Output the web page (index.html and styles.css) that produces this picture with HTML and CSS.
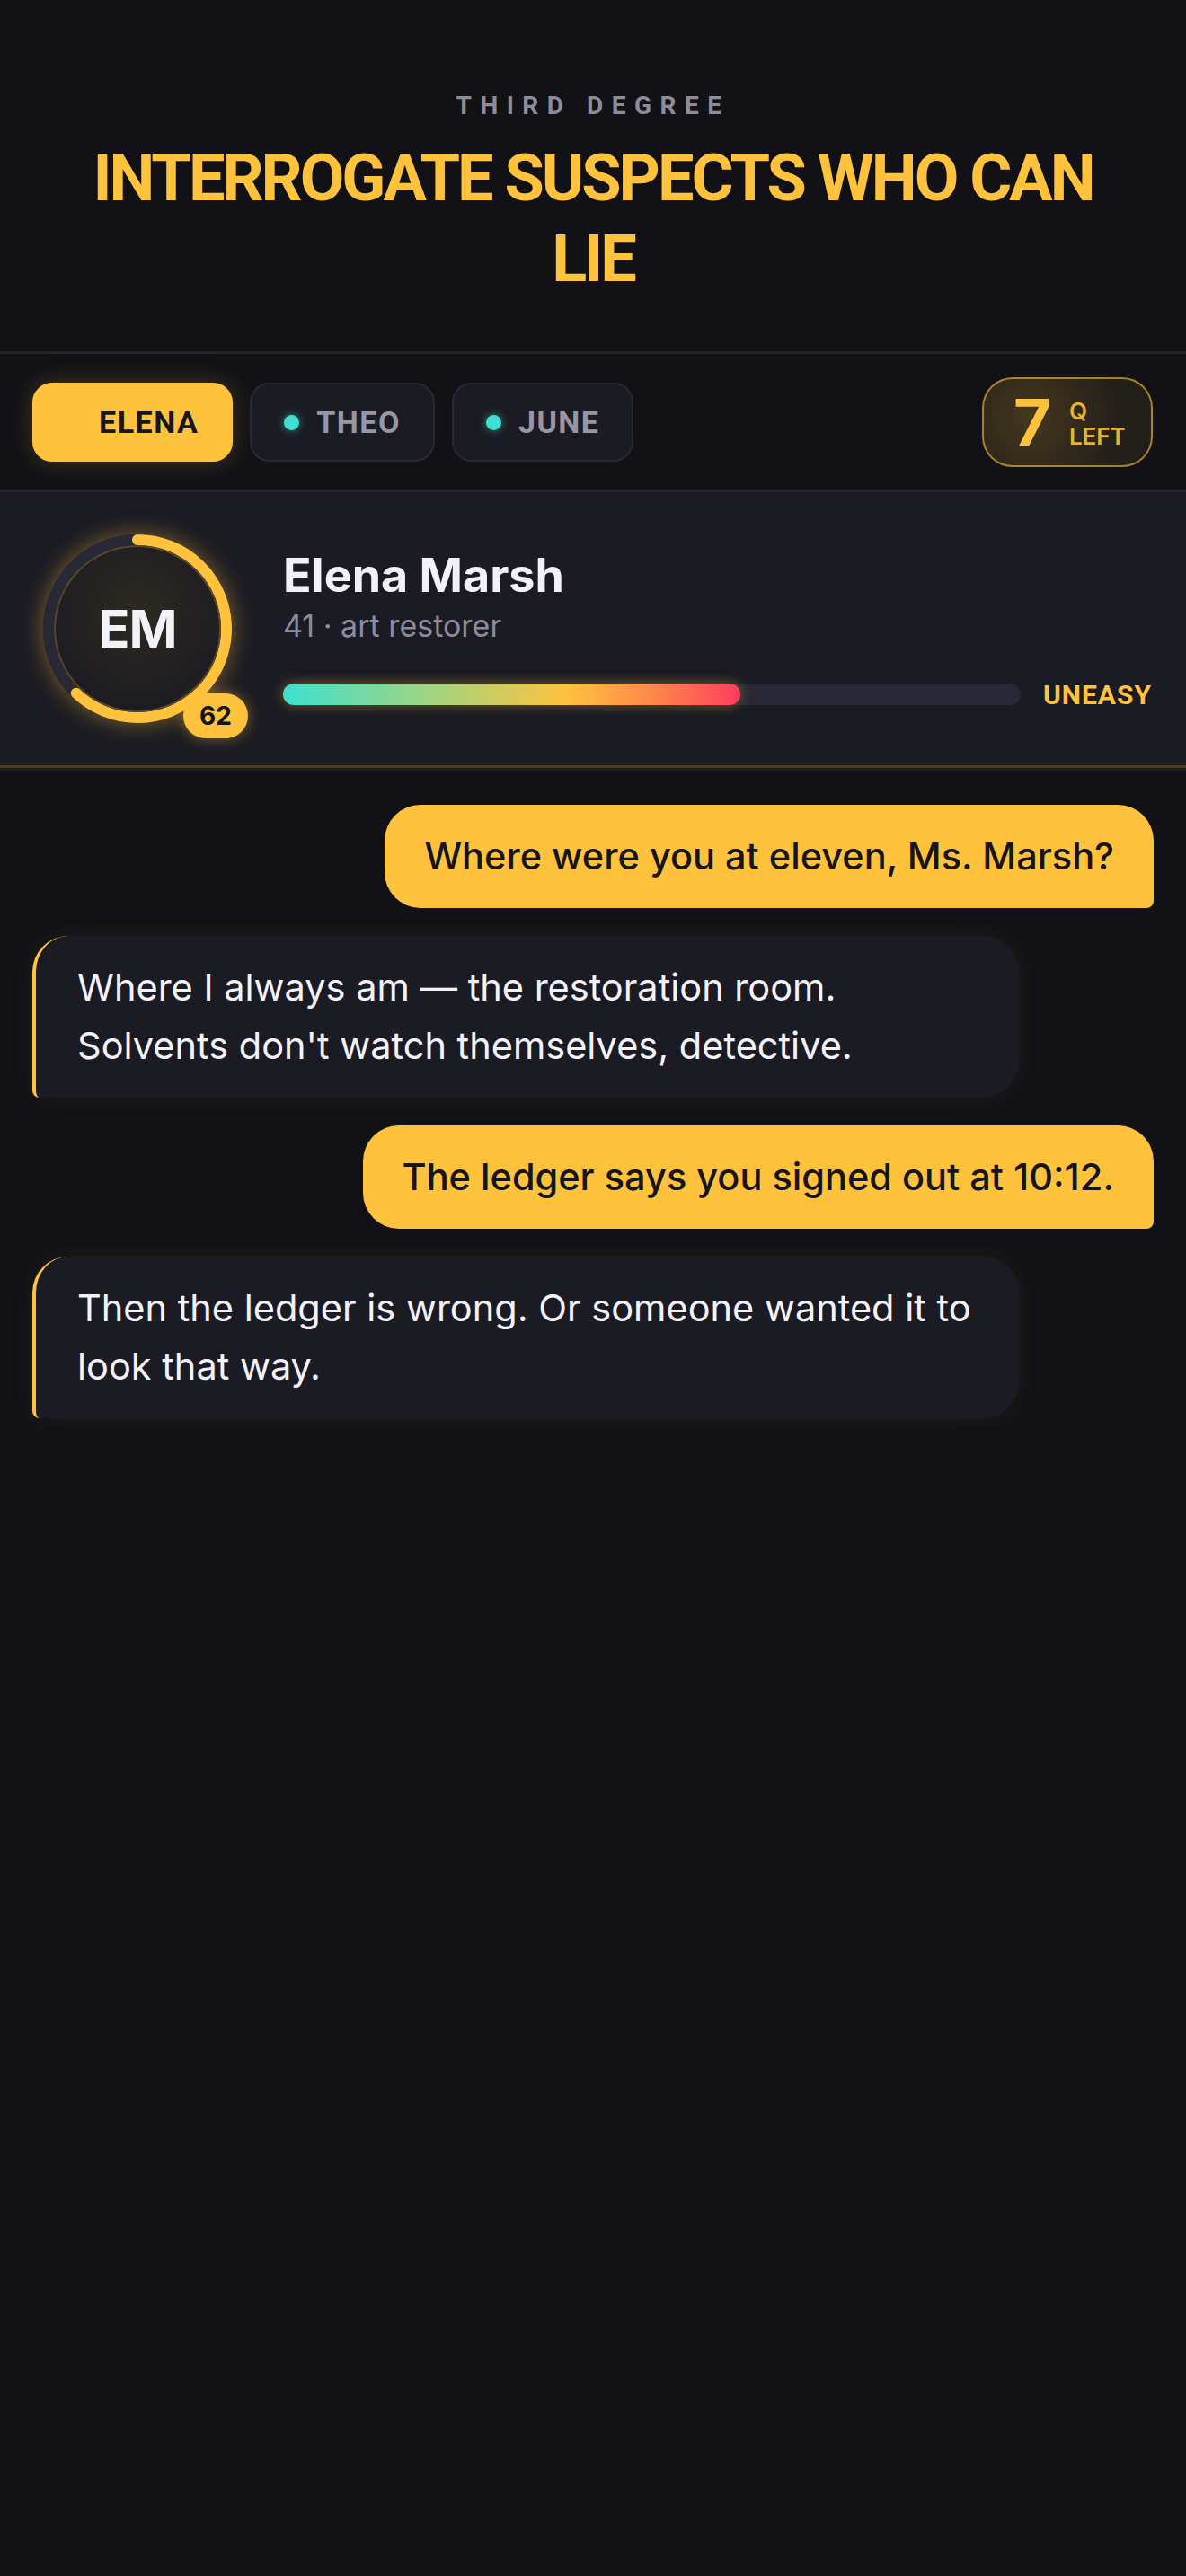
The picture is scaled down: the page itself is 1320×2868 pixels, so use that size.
FILE: index.html
```html
<!DOCTYPE html>
<html lang="en">
<head>
<meta charset="utf-8">
<title>Third Degree</title>
<link rel="stylesheet" href="styles.css">
</head>
<body>
<div class="app">
  <header class="header">
    <div class="eyebrow">THIRD DEGREE</div>
    <h1 class="title">INTERROGATE SUSPECTS WHO CAN LIE</h1>
  </header>

  <nav class="tabs-row">
    <div class="tabs">
      <div class="tab active"><span class="dot"></span><span class="tab-label">ELENA</span></div>
      <div class="tab"><span class="dot"></span><span class="tab-label">THEO</span></div>
      <div class="tab"><span class="dot"></span><span class="tab-label">JUNE</span></div>
    </div>
    <div class="qleft">
      <span class="qnum">7</span>
      <span class="qtext">Q<br>LEFT</span>
    </div>
  </nav>

  <section class="suspect">
    <div class="avatar">
      <svg class="ring" width="210" height="210" viewBox="0 0 210 210">
        <circle cx="105" cy="105" r="99" fill="none" stroke="#292836" stroke-width="12"/>
        <circle cx="105" cy="105" r="99" fill="none" stroke="#ffc23d" stroke-width="12" stroke-linecap="round" stroke-dasharray="385.7 622.0" transform="rotate(-90 105 105)"/>
      </svg>
      <div class="disc">EM</div>
      <div class="score">62</div>
    </div>
    <div class="info">
      <div class="name">Elena Marsh</div>
      <div class="meta">41 · art restorer</div>
      <div class="stress">
        <div class="track"><div class="fill" style="width:62%"></div></div>
        <span class="mood">UNEASY</span>
      </div>
    </div>
  </section>

  <main class="chat">
    <div class="msg ask">Where were you at eleven, Ms. Marsh?</div>
    <div class="msg reply">Where I always am — the restoration room. Solvents don't watch themselves, detective.</div>
    <div class="msg ask">The ledger says you signed out at 10:12.</div>
    <div class="msg reply">Then the ledger is wrong. Or someone wanted it to look that way.</div>
  </main>
</div>
</body>
</html>
```

FILE: styles.css
```css
* { box-sizing: border-box; }

html, body {
  margin: 0;
  padding: 0;
  background: #111116;
  min-height: 2868px;
}

body {
  font-family: Inter, "Noto Sans", sans-serif;
  color: #f2f1f7;
}

.header {
  padding: 101px 36px 57px;
  text-align: center;
  border-bottom: 3px solid #24232e;
}

.eyebrow {
  font-family: Roboto, "Liberation Sans", sans-serif;
  font-weight: 700;
  font-size: 28px;
  line-height: 34px;
  letter-spacing: 9.5px;
  color: #8e8c9c;
}

.title {
  margin: 19px auto 0;
  max-width: 1160px;
  font-family: Roboto, "Liberation Sans", sans-serif;
  font-weight: 700;
  font-size: 72px;
  line-height: 90px;
  letter-spacing: -3px;
  color: #ffc23d;
}

.tabs-row {
  display: flex;
  align-items: center;
  justify-content: space-between;
  padding: 26px 37px 25px 36px;
  border-bottom: 3px solid #24232e;
}

.tabs {
  display: flex;
  gap: 19px;
}

.tab {
  display: flex;
  align-items: center;
  gap: 19px;
  height: 88px;
  padding: 0 36px;
  border-radius: 22px;
  background: #1b1b24;
  border: 2px solid #292835;
}

.tab .dot {
  width: 17px;
  height: 17px;
  border-radius: 50%;
  background: #3ee0cf;
  box-shadow: 0 0 10px rgba(62, 224, 207, 0.6);
}

.tab-label {
  font-family: Roboto, "Liberation Sans", sans-serif;
  font-weight: 700;
  font-size: 34px;
  letter-spacing: 1.5px;
  color: #9896a6;
}

.tab.active {
  background: #ffc23d;
  border-color: #ffc23d;
  box-shadow: 0 0 28px rgba(255, 194, 61, 0.22);
}

.tab.active .dot {
  background: #ffc23d;
  box-shadow: none;
}

.tab.active .tab-label {
  color: #17161c;
}

.qleft {
  display: flex;
  align-items: center;
  gap: 20px;
  width: 190px;
  height: 100px;
  padding-left: 33px;
  border-radius: 34px;
  border: 2px solid rgba(255, 194, 61, 0.6);
  background: radial-gradient(circle at 28% 45%, rgba(255, 194, 61, 0.22), rgba(255, 194, 61, 0.08) 70%);
}

.qnum {
  font-weight: 700;
  font-size: 72px;
  line-height: 1;
  color: #ffc23d;
}

.qtext {
  font-weight: 600;
  font-size: 26px;
  line-height: 28px;
  color: #e6b238;
  padding-top: 4px;
}

.suspect {
  display: flex;
  align-items: center;
  gap: 57px;
  padding: 47px 38px 47px 48px;
  background: #1b1b23;
  border-bottom: 3px solid #4a3d22;
  box-shadow: 0 3px 0 #1d1c25;
}

.avatar {
  position: relative;
  width: 210px;
  height: 210px;
  flex: none;
  border-radius: 50%;
  box-shadow: 0 0 26px rgba(255, 194, 61, 0.45);
}

.ring {
  position: absolute;
  left: 0;
  top: 0;
  display: block;
}

.disc {
  position: absolute;
  left: 12px;
  top: 12px;
  width: 186px;
  height: 186px;
  border-radius: 50%;
  border: 2px solid rgba(255, 194, 61, 0.25);
  background: radial-gradient(circle at 50% 40%, #2e2920, #1d1c22 75%);
  display: flex;
  align-items: center;
  justify-content: center;
  font-weight: 700;
  font-size: 58px;
  letter-spacing: -1px;
  color: #f2f1f7;
}

.score {
  position: absolute;
  left: 156px;
  top: 177px;
  width: 72px;
  height: 50px;
  border-radius: 25px;
  background: #ffc23d;
  box-shadow: 0 0 16px rgba(255, 194, 61, 0.45);
  display: flex;
  align-items: center;
  justify-content: center;
  font-weight: 700;
  font-size: 28px;
  color: #141318;
}

.info {
  flex: 1;
  display: flex;
  flex-direction: column;
}

.name {
  font-weight: 700;
  font-size: 52px;
  line-height: 62px;
  color: #f2f1f7;
}

.meta {
  margin-top: 4px;
  font-size: 34px;
  line-height: 42px;
  color: #8d8b9c;
}

.stress {
  margin-top: 38px;
  display: flex;
  align-items: center;
  gap: 25px;
}

.track {
  flex: 1;
  height: 24px;
  border-radius: 12px;
  background: #292836;
}

.fill {
  height: 100%;
  border-radius: 12px;
  background: linear-gradient(90deg, #3ee0cf 0%, #a9d37a 35%, #ffc23d 62%, #ff8a4a 80%, #ff3d5e 100%);
  box-shadow: 0 0 14px rgba(255, 194, 61, 0.4);
}

.mood {
  font-family: Roboto, "Liberation Sans", sans-serif;
  font-weight: 700;
  font-size: 30px;
  letter-spacing: 1px;
  color: #ffc23d;
}

.chat {
  display: flex;
  flex-direction: column;
  gap: 31px;
  padding: 41px 36px;
}

.msg {
  line-height: 65px;
}

.ask {
  align-self: flex-end;
  padding: 25px 44px;
  background: #ffc23d;
  color: #16151b;
  font-size: 41.5px;
  font-weight: 500;
  border-radius: 40px 40px 8px 40px;
}

.reply {
  align-self: flex-start;
  max-width: 1098px;
  padding: 25px 44px 25px 46px;
  background: #1b1b24;
  color: #f3f2f8;
  font-size: 41.5px;
  border-left: 4px solid #ffc23d;
  border-radius: 40px 40px 40px 8px;
  box-shadow: 0 0 30px rgba(255, 194, 61, 0.07);
}
```
